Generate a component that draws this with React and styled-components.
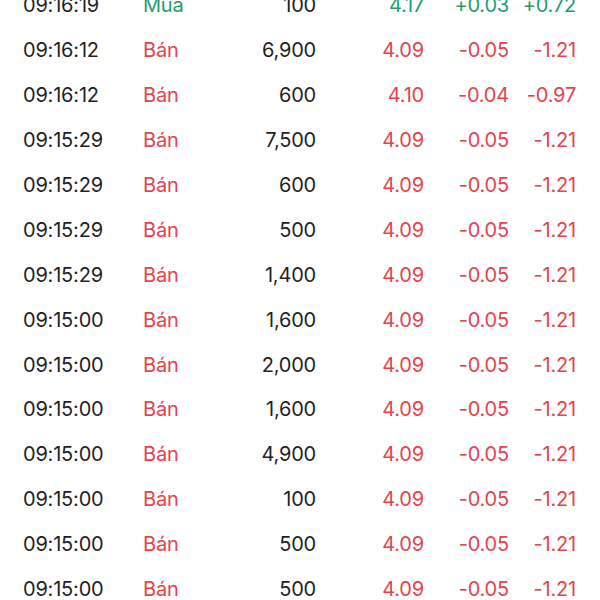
import React from 'react';
import styled, { createGlobalStyle } from 'styled-components';

const GlobalStyle = createGlobalStyle`
  html, body {
    margin: 0;
    padding: 0;
    background: #ffffff;
    overflow: hidden;
  }
  body {
    font-family: Inter, "Noto Sans", sans-serif;
  }
`;

const Screen = styled.div`
  width: 600px;
  height: 600px;
  overflow: hidden;
  background: #fff;
`;

const List = styled.div`
  margin-top: -17px;
  display: flex;
  flex-direction: column;
`;

const Row = styled.div`
  display: grid;
  grid-template-columns: 120px 60px 113px 108px 85px 67px;
  align-items: center;
  height: 44.9px;
  padding-left: 23px;
  font-size: 20px;
  letter-spacing: -0.2px;
  color: #1f1f1f;
`;

const Cell = styled.div`
  text-align: ${(p) => (p.$right ? 'right' : 'left')};
  color: ${(p) => (p.$tone === 'up' ? '#1f9e6c' : p.$tone === 'down' ? '#e5434d' : '#1f1f1f')};
  white-space: nowrap;
`;

const trades = [
  ['09:16:19', 'Mua', '100', '4.17', '+0.03', '+0.72'],
  ['09:16:12', 'Bán', '6,900', '4.09', '-0.05', '-1.21'],
  ['09:16:12', 'Bán', '600', '4.10', '-0.04', '-0.97'],
  ['09:15:29', 'Bán', '7,500', '4.09', '-0.05', '-1.21'],
  ['09:15:29', 'Bán', '600', '4.09', '-0.05', '-1.21'],
  ['09:15:29', 'Bán', '500', '4.09', '-0.05', '-1.21'],
  ['09:15:29', 'Bán', '1,400', '4.09', '-0.05', '-1.21'],
  ['09:15:00', 'Bán', '1,600', '4.09', '-0.05', '-1.21'],
  ['09:15:00', 'Bán', '2,000', '4.09', '-0.05', '-1.21'],
  ['09:15:00', 'Bán', '1,600', '4.09', '-0.05', '-1.21'],
  ['09:15:00', 'Bán', '4,900', '4.09', '-0.05', '-1.21'],
  ['09:15:00', 'Bán', '100', '4.09', '-0.05', '-1.21'],
  ['09:15:00', 'Bán', '500', '4.09', '-0.05', '-1.21'],
  ['09:15:00', 'Bán', '500', '4.09', '-0.05', '-1.21'],
];

const App = () => {
  return (
    <Screen>
      <GlobalStyle />
      <List>
        {trades.map(([time, side, vol, price, chg, pct], i) => {
          const tone = side === 'Mua' ? 'up' : 'down';
          return (
            <Row key={i}>
              <Cell>{time}</Cell>
              <Cell $tone={tone}>{side}</Cell>
              <Cell $right>{vol}</Cell>
              <Cell $right $tone={tone}>{price}</Cell>
              <Cell $right $tone={tone}>{chg}</Cell>
              <Cell $right $tone={tone}>{pct}</Cell>
            </Row>
          );
        })}
      </List>
    </Screen>
  );
};

export default App;
